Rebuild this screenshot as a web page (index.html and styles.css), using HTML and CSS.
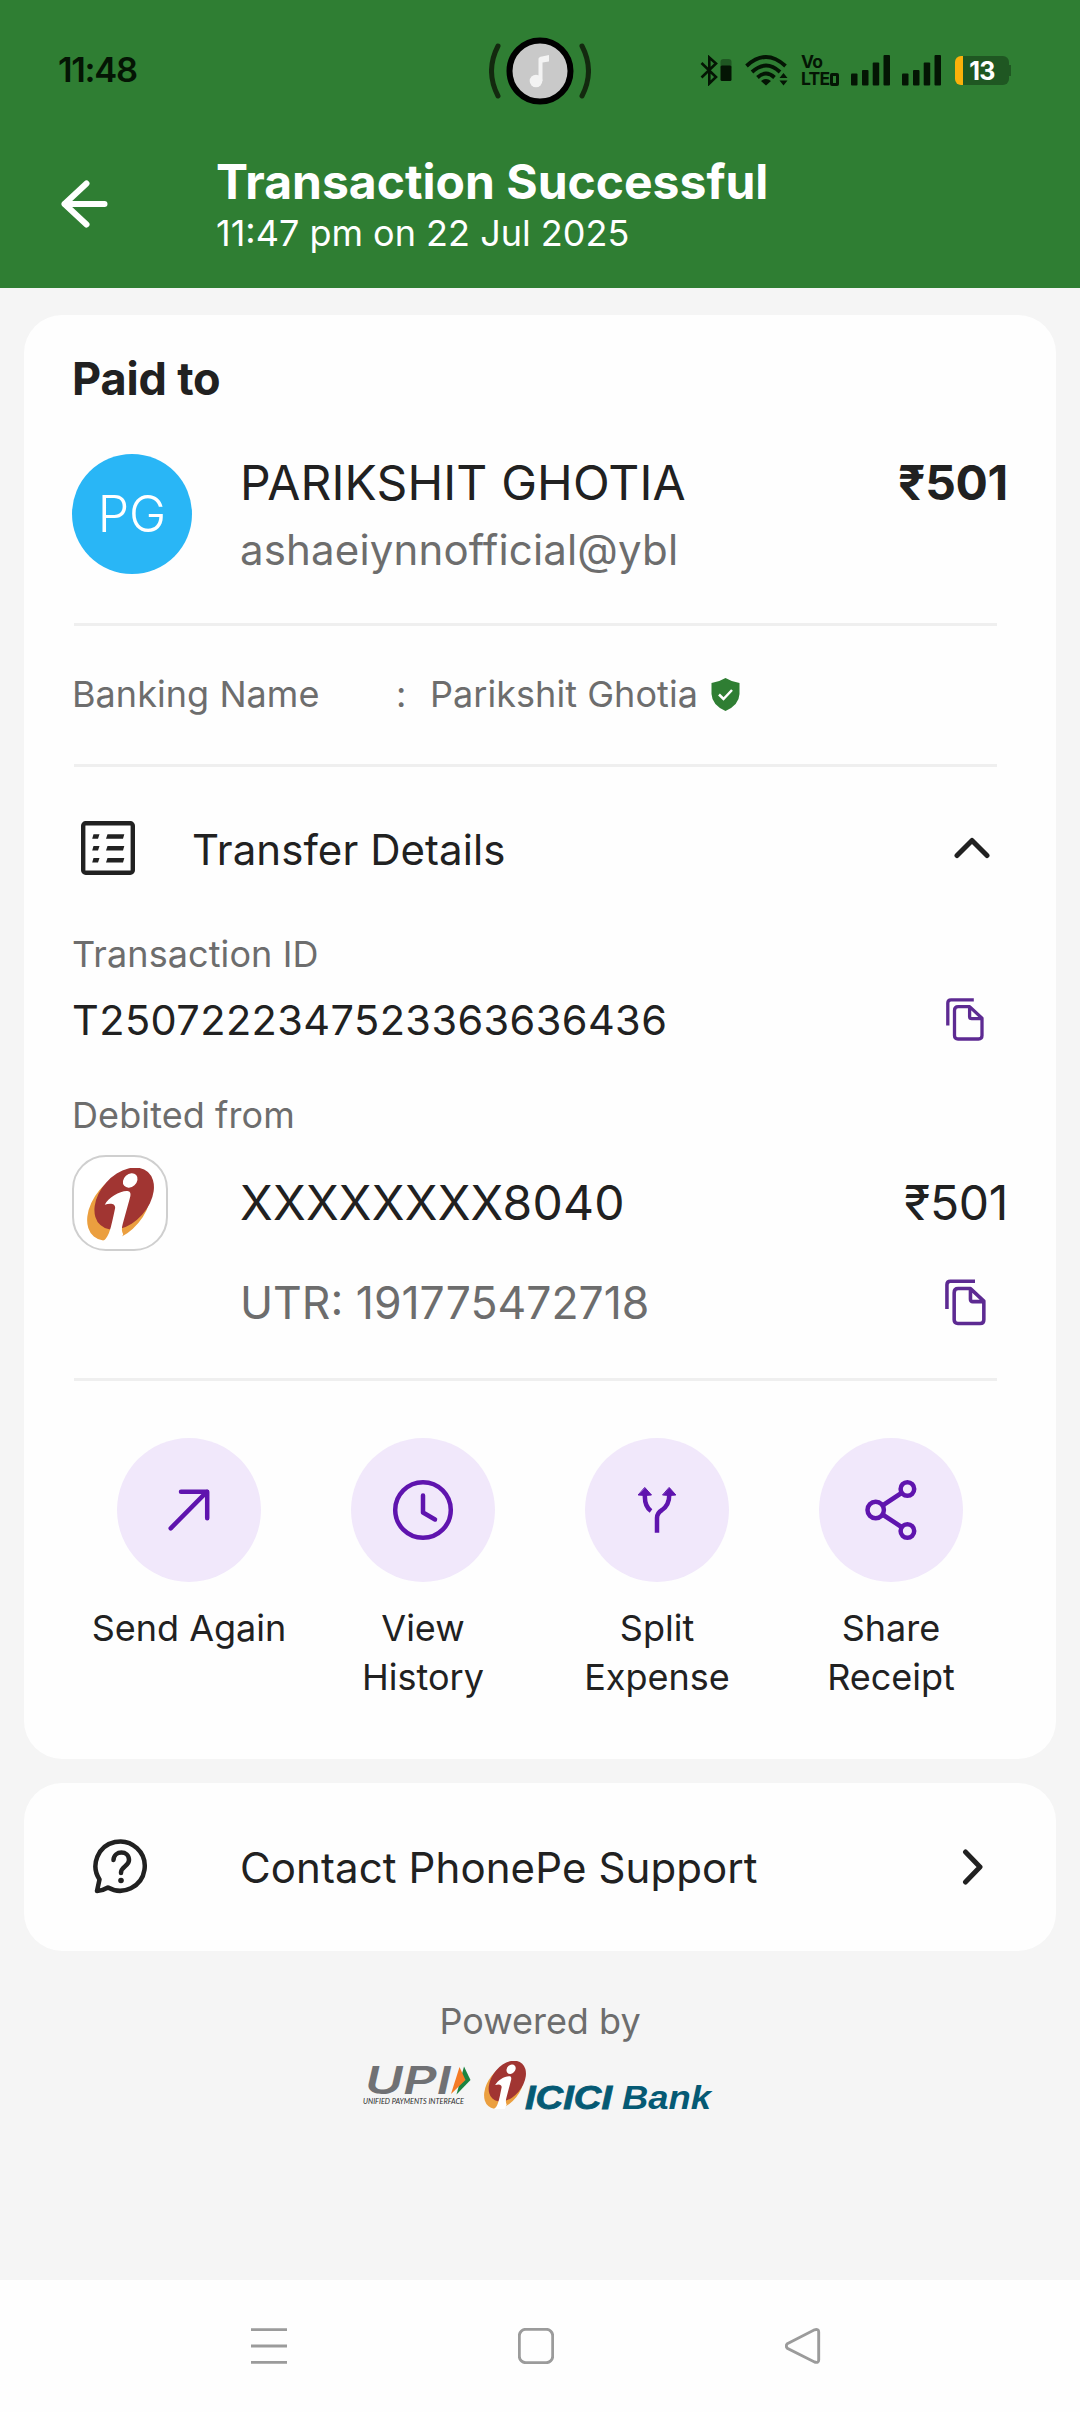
FILE: index.html
```html
<!DOCTYPE html>
<html lang="en">
<head>
<meta charset="utf-8">
<title>Transaction Successful</title>
<link rel="stylesheet" href="styles.css">
</head>
<body>
<svg class="defs" width="0" height="0" aria-hidden="true">
  <symbol id="icici" viewBox="81 81 200 217" preserveAspectRatio="none">
    <ellipse cx="176" cy="196" rx="116" ry="76" transform="rotate(-50 176 196)" class="logo-orange"/>
    <ellipse cx="192" cy="172" rx="106" ry="72" transform="rotate(-48 192 172)" class="logo-red"/>
    <ellipse cx="210" cy="118" rx="24" ry="19" transform="rotate(-42 210 118)" fill="#fff"/>
    <path d="M134 190C146 168 182 147 204 150C213 152 212 162 208 174L188 246Q182 266 189 278L180 298H128C146 290 152 262 165 200C166 187 152 184 134 190Z" fill="#fff"/>
  </symbol>
  <symbol id="copy" viewBox="0 0 38 43">
    <path d="M1.8 27.5V5Q1.8 1.8 5 1.8H27.8M8.5 12.5Q8.5 8.6 12.2 8.6H23.6L36 20.2V37.5Q36 41 32.5 41H12Q8.5 41 8.5 37.5ZM23.6 8.6V18.5Q23.6 20.7 25.8 20.7H36"/>
  </symbol>
</svg>

<header class="header">
  <div class="status">
    <span class="clock">11:48</span>
    <svg class="camera" width="102" height="68" viewBox="0 0 102 68">
      <path d="M9 9Q-4 34 9 59M93 9Q106 34 93 59" fill="none" stroke="#13290f" stroke-width="5" stroke-linecap="round"/>
      <circle cx="51" cy="34" r="30.5" fill="#c9c9c9" stroke="#000" stroke-width="6"/>
      <circle cx="47" cy="44" r="6.3" fill="#f3f3f3"/>
      <path d="M49.500 44V22Q49.500 20 53 19.500L60 18V24.500L53.500 25.500V44Z" fill="#f3f3f3"/>
    </svg>
    <div class="indicators">
      <svg width="33" height="31" viewBox="0 0 33 31">
        <path d="M1.5 8L16 22L9.3 28.5V2.5L16 8.5L1.5 22.5" fill="none" stroke="#041504" stroke-width="2.6"/>
        <rect x="20.5" y="4" width="11" height="10" rx="3" fill="#1f5722"/>
        <rect x="20.5" y="10.500" width="11" height="15.5" rx="1.5" fill="#041504"/>
      </svg>
      <svg width="44" height="31" viewBox="0 0 44 31">
        <g fill="none" stroke="#041504" stroke-width="3.8">
          <path d="M1.500 11Q21 -7 40.500 11"/><path d="M7 17Q21 4 35 17"/><path d="M12.500 22.500Q21 14.500 29.500 22.500"/>
        </g>
        <path d="M16 26Q21 22 26 26L21 30.500Z M34.500 23L38.500 18L42.500 23Z M34.500 25.500H42.500L38.500 30.500Z" fill="#041504"/>
      </svg>
      <div class="volte"><span>Vo</span><span>LTE<i></i></span></div>
      <svg width="39" height="31" viewBox="0 0 39 31" fill="#041504"><rect y="18.500" width="6.500" height="12" rx="1"/><rect x="11" y="15" width="6.500" height="15.500" rx="1"/><rect x="21.700" y="7.500" width="6.500" height="23" rx="1"/><rect x="32.500" width="6.500" height="30.500" rx="1"/></svg>
      <svg width="39" height="31" viewBox="0 0 39 31" fill="#041504"><rect y="18.500" width="6.500" height="12" rx="1"/><rect x="11" y="15" width="6.500" height="15.500" rx="1"/><rect x="21.700" y="7.500" width="6.500" height="23" rx="1"/><rect x="32.500" width="6.500" height="30.500" rx="1"/></svg>
      <div class="battery">13</div>
    </div>
  </div>
  <div class="appbar">
    <svg class="back" width="48" height="48" viewBox="0 0 48 48"><path d="M25.500 3.500L3.500 24L25.500 44.500M3.500 24H43.500"/></svg>
    <div>
      <h1>Transaction Successful</h1>
      <p>11:47 pm on 22 Jul 2025</p>
    </div>
  </div>
</header>

<main>
  <section class="card">
    <h2>Paid to</h2>
    <div class="payee">
      <div class="avatar">PG</div>
      <div class="who">
        <div class="name">PARIKSHIT GHOTIA</div>
        <div class="vpa">ashaeiynnofficial@ybl</div>
      </div>
      <div class="amount">₹501</div>
    </div>
    <hr>
    <div class="banking">
      <span class="key">Banking Name</span><span class="colon">:</span><span>Parikshit Ghotia</span>
      <svg width="29" height="33" viewBox="0 0 29 33"><path d="M14.500 0Q21 4 28.500 5V16Q28 27 14.500 33Q1 27 .5 16V5Q8 4 14.500 0Z" fill="#2f7e33"/><path d="M8 16.500L12.500 21L21 12" fill="none" stroke="#fff" stroke-width="2.500"/></svg>
    </div>
    <hr class="second">
    <div class="details">
      <svg width="60" height="60" viewBox="0 0 60 60">
        <rect x="5.200" y="5.200" width="49.600" height="49.600" rx="2.500" fill="none" stroke="#212121" stroke-width="4.400"/>
        <g fill="#212121"><path d="M15.500 16.200H21.500L20 20.800H14.200ZM15.500 28H21.500L20 32.600H14.200ZM15.500 40H21.500L20 44.600H14.200ZM29.500 16.200H46.300L45 20.800H28ZM29.500 28H46.300L45 32.600H28ZM29.500 40H46.300L45 44.600H28Z"/></g>
      </svg>
      <span class="title">Transfer Details</span>
      <svg width="36" height="24" viewBox="0 0 36 24" class="chev"><path d="M3 19.500L18 4.500L33 19.500"/></svg>
    </div>
    <div class="label first">Transaction ID</div>
    <div class="txn"><span>T2507222347523363636436</span><svg class="copy" width="38" height="43"><use href="#copy"/></svg></div>
    <div class="label">Debited from</div>
    <div class="account">
      <div class="bank"><svg width="67" height="73"><use href="#icici"/></svg></div>
      <span class="number">XXXXXXXX8040</span>
      <span class="debit">₹501</span>
    </div>
    <div class="utr"><span>UTR: 191775472718</span><svg class="copy" width="41" height="47"><use href="#copy"/></svg></div>
    <hr class="third">
    <div class="actions">
      <div class="action"><div class="disc"><svg width="72" height="72" viewBox="-36 -36 72 72"><path d="M-18.300 18.300L18 -18.300M-8 -18.300H18.200V8.300"/></svg></div><p>Send Again</p></div>
      <div class="action"><div class="disc"><svg width="72" height="72" viewBox="-36 -36 72 72"><circle r="27.800"/><path d="M0 -14.500V2.500L12 9.500"/></svg></div><p>View<br>History</p></div>
      <div class="action"><div class="disc"><svg width="72" height="72" viewBox="-36 -36 72 72"><path stroke-linecap="butt" d="M-12 -16Q-13 -4 -6 1M12.300 -16Q12.500 -5 5 0Q0 3 0 8V22.700"/><path class="tip" d="M-12 -22.300L-5.500 -15L-12 -14.500L-18.500 -15ZM12.400 -22.300L18.900 -15L12.400 -14.500L5.900 -15Z"/></svg></div><p>Split<br>Expense</p></div>
      <div class="action"><div class="disc"><svg width="72" height="72" viewBox="-36 -36 72 72"><circle cx="-15.300" r="8.200"/><circle cx="16.400" cy="-21" r="6.800"/><circle cx="16.400" cy="21" r="6.800"/><path stroke-linecap="butt" d="M-8.500 -4.500L10.500 -17M-8.500 4.500L10.500 17"/></svg></div><p>Share<br>Receipt</p></div>
    </div>
  </section>

  <section class="card support">
    <svg width="56" height="56" viewBox="0 0 56 56" class="help">
      <path d="M4 52L6.500 40.500A24.600 24.600 0 1 1 15 48.500Q10 51.500 4 52Z"/>
      <path d="M20.500 21C21 11 36 11 36 21C36 27.500 28 27 28 34"/><circle cx="28" cy="41.500" r="2.800" class="dot"/>
    </svg>
    <span class="title">Contact PhonePe Support</span>
    <svg width="24" height="36" viewBox="0 0 24 36" class="chev"><path d="M4.500 3L19 18L4.500 33"/></svg>
  </section>

  <footer class="powered">
    <p>Powered by</p>
    <svg width="350" height="50" viewBox="0 0 350 50">
      <path d="M102 5.500L108.500 19L94.500 33.500Z" fill="#1b8441"/>
      <path d="M97.500 6L103.500 19L89 33Z" fill="#f47b25"/>
      <text x="3" y="33" class="upi" textLength="86" lengthAdjust="spacingAndGlyphs">UPI</text>
      <text x="1" y="43" class="tag" textLength="101" lengthAdjust="spacingAndGlyphs">UNIFIED PAYMENTS INTERFACE</text>
      <use href="#icici" x="122" y="0" width="42" height="48"/>
      <text x="163" y="47.500" class="icici" textLength="87" lengthAdjust="spacingAndGlyphs">ICICI</text>
      <text x="260" y="47.500" class="bankname" textLength="89" lengthAdjust="spacingAndGlyphs">Bank</text>
    </svg>
  </footer>
</main>

<nav class="navbar">
  <svg width="36" height="36" viewBox="0 0 36 36"><path d="M0 1.600H36M0 18H36M0 34.400H36"/></svg>
  <svg width="36" height="36" viewBox="0 0 36 36"><rect x="1.300" y="1.300" width="33.400" height="33.400" rx="6.500"/></svg>
  <svg width="36" height="36" viewBox="0 0 36 36"><path d="M2.300 15.800L29.500 1.800Q33.700 .6 33.700 4V32Q33.700 35.400 29.500 34L2.300 20.200Q.2 18 2.300 15.800Z"/></svg>
</nav>
</body>
</html>
```
FILE: styles.css
```css
* { box-sizing: border-box; }
body {
  margin: 0;
  width: 1080px;
  height: 2412px;
  display: flex;
  flex-direction: column;
  background: #f5f5f5;
  color: #212121;
  font-family: Inter, "Noto Sans", sans-serif;
  overflow: hidden;
}
h1, h2, p { margin: 0; }
svg { display: block; flex: none; }
.defs { position: absolute; }
.logo-orange { fill: #eb9f3f; }
.logo-red { fill: #a13532; }

.header { height: 288px; background: #2f7e33; color: #fff; }
.status {
  height: 141px;
  display: grid;
  grid-template-columns: 1fr auto 1fr;
  align-items: center;
  padding: 0 69px 0 58px;
}
.clock { font-size: 34.500px; font-weight: 600; letter-spacing: -1.300px; color: #041504; line-height: 40px; padding-bottom: 1px; }
.camera { margin-left: 10px; }
.indicators { display: flex; gap: 12px; justify-content: flex-end; align-items: center; }
.volte { width: 38px; height: 31px; display: flex; flex-direction: column; justify-content: space-between; color: #041504; font-size: 17.500px; font-weight: 700; line-height: 14px; letter-spacing: -.8px; }
.volte span { display: flex; align-items: center; white-space: nowrap; }
.volte i { width: 9px; height: 13px; border: 3px solid #041504; border-radius: 2px; flex: none; margin-left: 1px; }
.battery {
  position: relative;
  width: 54px;
  height: 29px;
  margin: 0 2px;
  border-radius: 6px;
  background: linear-gradient(90deg, #fbb10a 8px, #1f5722 8px);
  font-size: 25px;
  font-weight: 700;
  line-height: 30px;
  text-align: center;
  letter-spacing: -.8px;
}
.battery::after { content: ""; position: absolute; right: -2px; top: 9px; width: 2px; height: 11px; background: #1f5722; }

.appbar { display: flex; align-items: flex-start; padding: 10px 0 0 61px; }
.back { margin: 29px 107px 0 0; fill: none; stroke: #fff; stroke-width: 6; stroke-linecap: round; stroke-linejoin: round; }
.appbar h1 { font-size: 48px; font-weight: 700; line-height: 60px; padding-top: 1px; }
.appbar p { font-size: 36px; line-height: 44px; margin-top: -1px; }

main { flex: 1; padding: 27px 24px 0; }
.card { background: #fefefe; border-radius: 38px; padding: 34px 48px 57px; }
.card h2 { font-size: 45px; font-weight: 700; line-height: 60px; letter-spacing: -.15px; }
.payee { display: flex; margin-top: 45px; height: 120px; }
.avatar { width: 120px; height: 120px; margin-right: 48px; border-radius: 50%; background: #29b6f6; color: #fff; font-size: 50px; font-weight: 300; line-height: 120px; text-align: center; }
.who { flex: 1; }
.name { padding-top: 1px; font-size: 48px; line-height: 56px; letter-spacing: .15px; }
.vpa { margin-top: 15px; font-size: 42px; line-height: 48px; letter-spacing: .15px; color: #6d6d6d; }
.amount { padding-top: 1px; font-size: 48px; font-weight: 700; line-height: 56px; letter-spacing: -.3px; }
hr { height: 3px; border: 0; margin: 49px 11px 0 2px; background: #efefef; }
.banking { display: flex; align-items: center; margin-top: 44px; font-size: 36px; line-height: 48px; letter-spacing: .05px; color: #6d6d6d; }
.key { width: 324px; }
.colon { width: 34px; }
.banking svg { margin-left: 13px; }
.second { margin-top: 46px; }
.details { display: flex; align-items: center; height: 60px; margin: 51px 18px 0 6px; }
.title { flex: 1; font-size: 42px; line-height: 52px; letter-spacing: .07px; }
.details .title { margin-left: 54px; padding-top: 4px; }
.chev { fill: none; stroke: #212121; stroke-width: 5; stroke-linecap: round; stroke-linejoin: round; }
.label { margin-top: 43px; font-size: 36px; line-height: 48px; letter-spacing: .1px; color: #6d6d6d; }
.label.first { margin-top: 52px; }
.txn { display: flex; justify-content: space-between; align-items: center; margin-top: 14px; padding-right: 24px; font-size: 41.500px; line-height: 56px; letter-spacing: .4px; }
.txn svg { margin-bottom: 1px; }
.copy { fill: none; stroke: #5d2a92; stroke-width: 3.300; stroke-linejoin: round; }
.account { display: flex; align-items: center; margin-top: 16px; height: 96px; font-size: 48px; }
.bank { width: 96px; height: 96px; margin-right: 72px; padding: 11px 0 0 13px; border: 2px solid #cfcfcf; border-radius: 34px; background: #fff; }
.number { flex: 1; letter-spacing: .2px; }
.number, .debit { padding-bottom: 2px; }
.debit { letter-spacing: -.3px; }
.utr { display: flex; justify-content: space-between; align-items: center; margin-top: 22px; padding: 0 22px 0 168px; font-size: 44.500px; line-height: 60px; color: #6d6d6d; }
.utr svg { margin-bottom: 1px; }
.third { margin-top: 45px; }
.actions { display: grid; grid-template-columns: repeat(4, 1fr); margin-top: 57px; }
.action { display: flex; flex-direction: column; align-items: center; text-align: center; }
.action p { margin-top: 22px; font-size: 36px; line-height: 49px; }
.disc { width: 144px; height: 144px; border-radius: 50%; background: #f1e8fb; display: grid; place-items: center; }
.disc svg { fill: none; stroke: #5f14ae; stroke-width: 4.500; stroke-linecap: round; stroke-linejoin: round; }
.disc .tip { fill: #5f14ae; stroke-width: 1; }

.support { display: flex; align-items: center; height: 168px; margin-top: 24px; padding: 0 71px 0 69px; }
.support .title { margin-left: 24px; padding: 1px 0 0 67px; letter-spacing: .1px; }
.help { fill: none; stroke: #212121; stroke-width: 4.500; stroke-linejoin: round; stroke-linecap: round; }
.help .dot { fill: #212121; stroke: none; }
.card.support { padding-bottom: 0; }

.powered { display: flex; flex-direction: column; align-items: center; margin-top: 46px; }
.powered p { font-size: 36px; line-height: 48px; color: #6d6d6d; }
.powered svg { margin: 16px 6px 0 0; overflow: visible; }
.powered .logo-red { fill: #aa2a2c; }
.upi { font: italic 600 38px Inter, sans-serif; fill: #707174; }
.tag { font: italic 400 7.300px Lato, sans-serif; fill: #2c2c2c; }
.icici { font: italic 700 33px "Liberation Sans", sans-serif; fill: #055a74; stroke: #055a74; stroke-width: .8; }
.bankname { font: italic 700 32.500px "Liberation Sans", sans-serif; fill: #055a74; }

.navbar { height: 132px; padding: 0 259px 0 251px; display: flex; justify-content: space-between; align-items: center; background: #fefefe; }
.navbar svg { fill: none; stroke: #9b9b9b; stroke-width: 2.900; }
```
